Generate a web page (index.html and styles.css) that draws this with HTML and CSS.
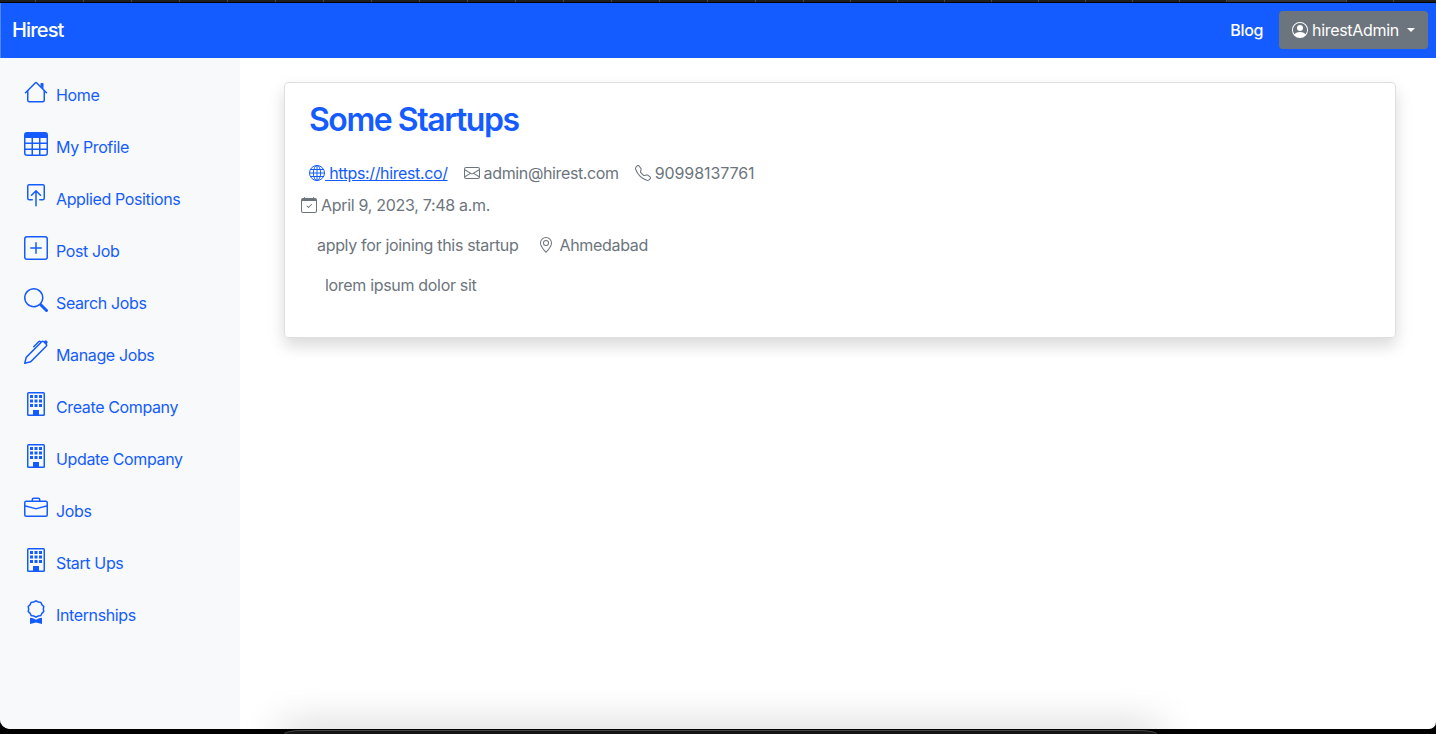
FILE: index.html
```
<!DOCTYPE html>
<html lang="en">
<head>
  <meta charset="UTF-8" />
  <meta name="viewport" content="width=device-width, initial-scale=1" />
  <title>Hirest</title>
  <link rel="stylesheet" href="styles.css">
</head>
<body>

  <!-- Icons -->
  <svg class="sprite" aria-hidden="true">
    <symbol id="house" viewBox="0 0 16 16">
      <path fill-rule="evenodd" d="M2 13.5V7h1v6.5a.5.5 0 0 0 .5.5h9a.5.5 0 0 0 .5-.5V7h1v6.5a1.5 1.5 0 0 1-1.5 1.5h-9A1.5 1.5 0 0 1 2 13.5zm11-11V6l-2-2V2.5a.5.5 0 0 1 .5-.5h1a.5.5 0 0 1 .5.5z"/>
      <path fill-rule="evenodd" d="M7.293 1.5a1 1 0 0 1 1.414 0l6.647 6.646a.5.5 0 0 1-.708.708L8 2.207 1.354 8.854a.5.5 0 1 1-.708-.708L7.293 1.5z"/>
    </symbol>
    <symbol id="table" viewBox="0 0 16 16">
      <path d="M0 2a2 2 0 0 1 2-2h12a2 2 0 0 1 2 2v12a2 2 0 0 1-2 2H2a2 2 0 0 1-2-2V2zm15 2h-4v3h4V4zm0 4h-4v3h4V8zm0 4h-4v3h3a1 1 0 0 0 1-1v-2zm-5 3v-3H6v3h4zm-5 0v-3H1v2a1 1 0 0 0 1 1h3zm-4-4h4V8H1v3zm0-4h4V4H1v3zm5-3v3h4V4H6zm4 4H6v3h4V8z"/>
    </symbol>
    <symbol id="box-arrow" viewBox="0 0 16 16">
      <path d="M3.5 10a.5.5 0 0 1-.5-.5v-8a.5.5 0 0 1 .5-.5h9a.5.5 0 0 1 .5.5v8a.5.5 0 0 1-.5.5h-2a.5.5 0 0 0 0 1h2A1.5 1.5 0 0 0 14 9.5v-8A1.5 1.5 0 0 0 12.5 0h-9A1.5 1.5 0 0 0 2 1.5v8A1.5 1.5 0 0 0 3.5 11h2a.5.5 0 0 0 0-1h-2z"/>
      <path d="M7.646 4.146a.5.5 0 0 1 .708 0l3 3a.5.5 0 0 1-.708.708L8.5 5.707V14.5a.5.5 0 0 1-1 0V5.707L5.354 7.854a.5.5 0 1 1-.708-.708l3-3z"/>
    </symbol>
    <symbol id="plus-square" viewBox="0 0 16 16">
      <path d="M14 1a1 1 0 0 1 1 1v12a1 1 0 0 1-1 1H2a1 1 0 0 1-1-1V2a1 1 0 0 1 1-1h12zM2 0a2 2 0 0 0-2 2v12a2 2 0 0 0 2 2h12a2 2 0 0 0 2-2V2a2 2 0 0 0-2-2H2z"/>
      <path d="M8 4a.5.5 0 0 1 .5.5v3h3a.5.5 0 0 1 0 1h-3v3a.5.5 0 0 1-1 0v-3h-3a.5.5 0 0 1 0-1h3v-3A.5.5 0 0 1 8 4z"/>
    </symbol>
    <symbol id="search" viewBox="0 0 16 16">
      <path d="M11.742 10.344a6.5 6.5 0 1 0-1.397 1.398h-.001c.03.04.062.078.098.115l3.85 3.85a1 1 0 0 0 1.415-1.414l-3.85-3.85a1.007 1.007 0 0 0-.115-.1zM12 6.5a5.5 5.5 0 1 1-11 0 5.5 5.5 0 0 1 11 0z"/>
    </symbol>
    <symbol id="pen" viewBox="0 0 16 16">
      <path d="m13.498.795.149-.149a1.207 1.207 0 1 1 1.707 1.708l-.149.148a1.5 1.5 0 0 1-.059 2.059L4.854 14.854a.5.5 0 0 1-.233.131l-4 1a.5.5 0 0 1-.606-.606l1-4a.5.5 0 0 1 .131-.232l9.642-9.642a.5.5 0 0 0-.642.056L6.854 4.854a.5.5 0 1 1-.708-.708L9.44.854A1.5 1.5 0 0 1 11.5.796a1.5 1.5 0 0 1 1.998-.001zm-.644.766a.5.5 0 0 0-.707 0L1.95 11.756l-.764 3.057 3.057-.764L14.44 3.854a.5.5 0 0 0 0-.708l-1.585-1.585z"/>
    </symbol>
    <symbol id="building" viewBox="0 0 16 16">
      <path fill-rule="evenodd" d="M3 0a1 1 0 0 0-1 1v14a1 1 0 0 0 1 1h10a1 1 0 0 0 1-1V1a1 1 0 0 0-1-1H3zm0 1h10v14h-3v-2.5a.5.5 0 0 0-.5-.5h-3a.5.5 0 0 0-.5.5V15H3V1z"/>
      <path d="M6 12.500a.5.5 0 0 1 .5-.5h3a.5.5 0 0 1 .5.5V16H6z"/>
      <path d="M4 2h2v2H4zM7 2h2v2H7zM10 2h2v2h-2zM4 5h2v2H4zM7 5h2v2H7zM10 5h2v2h-2zM4 8h2v2H4zM7 8h2v2H7zM10 8h2v2h-2z"/>
    </symbol>
    <symbol id="briefcase" viewBox="0 0 16 16">
      <path d="M6.5 1A1.5 1.5 0 0 0 5 2.5V3H1.5A1.5 1.5 0 0 0 0 4.5v8A1.5 1.5 0 0 0 1.5 14h13a1.5 1.5 0 0 0 1.5-1.5v-8A1.5 1.5 0 0 0 14.5 3H11v-.5A1.5 1.5 0 0 0 9.5 1h-3zm0 1h3a.5.5 0 0 1 .5.5V3H6v-.5a.5.5 0 0 1 .5-.5zm1.886 6.914L15 7.151V12.5a.5.5 0 0 1-.5.5h-13a.5.5 0 0 1-.5-.5V7.15l6.614 1.764a1.5 1.5 0 0 0 .772 0zM1.5 4h13a.5.5 0 0 1 .5.5v1.616L8.129 7.948a.5.5 0 0 1-.258 0L1 6.116V4.5a.5.5 0 0 1 .5-.5z"/>
    </symbol>
    <symbol id="award" viewBox="0 0 16 16">
      <path d="M9.669.864 8 0 6.331.864l-1.858.282-.842 1.68-1.337 1.32L2.6 6l-.306 1.854 1.337 1.32.842 1.68 1.858.282L8 12l1.669-.864 1.858-.282.842-1.68 1.337-1.32L13.4 6l.306-1.854-1.337-1.32-.842-1.68L9.669.864zm1.196 1.193.684 1.365 1.086 1.072L12.387 6l.248 1.506-1.086 1.072-.684 1.365-1.51.229L8 10.874l-1.355-.702-1.51-.229-.684-1.365-1.086-1.072L3.614 6l-.25-1.506 1.087-1.072.684-1.365 1.51-.229L8 1.126l1.356.702 1.509.229z"/>
      <path d="M4 11.794V16l4-1 4 1v-4.206l-2.018.306L8 13.126 6.018 12.1 4 11.794z"/>
    </symbol>
    <symbol id="person-circle" viewBox="0 0 16 16">
      <path d="M11 6a3 3 0 1 1-6 0 3 3 0 0 1 6 0z"/>
      <path fill-rule="evenodd" d="M0 8a8 8 0 1 1 16 0A8 8 0 0 1 0 8zm8-7a7 7 0 0 0-5.468 11.37C3.242 11.226 4.805 10 8 10s4.757 1.225 5.468 2.37A7 7 0 0 0 8 1z"/>
    </symbol>
    <symbol id="globe" viewBox="0 0 16 16">
      <g fill="none" stroke="currentColor">
        <circle cx="8" cy="8" r="7.5"/>
        <ellipse cx="8" cy="8" rx="3.6" ry="7.5"/>
        <path d="M8 .5v15M.5 8h15M1.600 4.5h12.8M1.600 11.5h12.8"/>
      </g>
    </symbol>
    <symbol id="envelope" viewBox="0 0 16 16">
      <path d="M0 4a2 2 0 0 1 2-2h12a2 2 0 0 1 2 2v8a2 2 0 0 1-2 2H2a2 2 0 0 1-2-2V4zm2-1a1 1 0 0 0-1 1v.217l7 4.2 7-4.2V4a1 1 0 0 0-1-1H2zm13 2.383-4.708 2.825L15 11.105V5.383zm-.034 6.876-5.64-3.471L8 9.583l-1.326-.795-5.64 3.47A1 1 0 0 0 2 13h12a1 1 0 0 0 .966-.741zM1 11.105l4.708-2.897L1 5.383v5.722z"/>
    </symbol>
    <symbol id="telephone" viewBox="0 0 16 16">
      <path d="M3.654 1.328a.678.678 0 0 0-1.015-.063L1.605 2.3c-.483.484-.661 1.169-.45 1.77a17.568 17.568 0 0 0 4.168 6.608 17.569 17.569 0 0 0 6.608 4.168c.601.211 1.286.033 1.77-.45l1.034-1.034a.678.678 0 0 0-.063-1.015l-2.307-1.794a.678.678 0 0 0-.58-.122l-2.19.547a1.745 1.745 0 0 1-1.657-.459L5.482 8.062a1.745 1.745 0 0 1-.46-1.657l.548-2.19a.678.678 0 0 0-.122-.58L3.654 1.328zM1.884.511a1.745 1.745 0 0 1 2.612.163L6.29 2.98c.329.423.445.974.315 1.494l-.547 2.19a.678.678 0 0 0 .178.643l2.457 2.457a.678.678 0 0 0 .644.178l2.189-.547a1.745 1.745 0 0 1 1.494.315l2.306 1.794c.829.645.905 1.87.163 2.611l-1.034 1.034c-.74.74-1.846 1.065-2.877.702a18.634 18.634 0 0 1-7.01-4.42 18.634 18.634 0 0 1-4.42-7.009c-.362-1.03-.037-2.137.703-2.877L1.885.511z"/>
    </symbol>
    <symbol id="calendar-check" viewBox="0 0 16 16">
      <path d="M10.854 7.146a.5.5 0 0 1 0 .708l-3 3a.5.5 0 0 1-.708 0l-1.5-1.5a.5.5 0 1 1 .708-.708L7.5 9.793l2.646-2.647a.5.5 0 0 1 .708 0z"/>
      <path d="M3.5 0a.5.5 0 0 1 .5.5V1h8V.5a.5.5 0 0 1 1 0V1h1a2 2 0 0 1 2 2v11a2 2 0 0 1-2 2H2a2 2 0 0 1-2-2V3a2 2 0 0 1 2-2h1V.5a.5.5 0 0 1 .5-.5zM1 4v10a1 1 0 0 0 1 1h12a1 1 0 0 0 1-1V4H1z"/>
    </symbol>
    <symbol id="geo-alt" viewBox="0 0 16 16">
      <path d="M12.166 8.94c-.524 1.062-1.234 2.12-1.96 3.07A31.493 31.493 0 0 1 8 14.58a31.481 31.481 0 0 1-2.206-2.57c-.726-.95-1.436-2.008-1.96-3.07C3.304 7.867 3 6.862 3 6a5 5 0 0 1 10 0c0 .862-.305 1.867-.834 2.94zM8 16s6-5.686 6-10A6 6 0 0 0 2 6c0 4.314 6 10 6 10z"/>
      <path d="M8 8a2 2 0 1 1 0-4 2 2 0 0 1 0 4zm0 1a3 3 0 1 0 0-6 3 3 0 0 0 0 6z"/>
    </symbol>
  </svg>

  <div class="tab-strip">
    <i class="tabs-wide"></i>
    <i class="tabs-narrow"></i>
    <i class="tab-active"></i>
    <i class="tabs-last"></i>
  </div>

  <div class="window">
    <nav class="navbar">
      <a class="brand" href="#">Hirest</a>
      <div class="navbar-end">
        <a class="blog" href="#">Blog</a>
        <button class="user-button">
          <svg class="icon"><use href="#person-circle"/></svg>
          <span>hirestAdmin</span>
          <i class="caret"></i>
        </button>
      </div>
    </nav>

    <div class="main">
      <!-- Sidebar -->
      <div class="sidebar">
        <a class="nav-link" href="#"><svg><use href="#house"/></svg><span>Home</span></a>
        <a class="nav-link" href="#"><svg><use href="#table"/></svg><span>My Profile</span></a>
        <a class="nav-link" href="#"><svg><use href="#box-arrow"/></svg><span>Applied Positions</span></a>
        <a class="nav-link" href="#"><svg><use href="#plus-square"/></svg><span>Post Job</span></a>
        <a class="nav-link" href="#"><svg><use href="#search"/></svg><span>Search Jobs</span></a>
        <a class="nav-link" href="#"><svg><use href="#pen"/></svg><span>Manage Jobs</span></a>
        <a class="nav-link" href="#"><svg><use href="#building"/></svg><span>Create Company</span></a>
        <a class="nav-link" href="#"><svg><use href="#building"/></svg><span>Update Company</span></a>
        <a class="nav-link" href="#"><svg><use href="#briefcase"/></svg><span>Jobs</span></a>
        <a class="nav-link" href="#"><svg><use href="#building"/></svg><span>Start Ups</span></a>
        <a class="nav-link" href="#"><svg><use href="#award"/></svg><span>Internships</span></a>
      </div>

      <!-- Startup details -->
      <div class="content">
        <div class="card">
          <h2 class="title">Some Startups</h2>
          <div class="row contact">
            <a class="item website" href="#"><svg class="icon"><use href="#globe"/></svg><span>&nbsp;https://hirest.co/</span></a>
            <span class="item email"><svg class="icon"><use href="#envelope"/></svg><span>admin@hirest.com</span></span>
            <span class="item phone"><svg class="icon"><use href="#telephone"/></svg><span>90998137761</span></span>
          </div>
          <div class="row date">
            <span class="item"><svg class="icon"><use href="#calendar-check"/></svg><span>April 9, 2023, 7:48 a.m.</span></span>
          </div>
          <div class="row about">
            <span class="summary">apply for joining this startup</span>
            <span class="item place"><svg class="icon"><use href="#geo-alt"/></svg><span>Ahmedabad</span></span>
          </div>
          <div class="row description">lorem ipsum dolor sit</div>
        </div>
      </div>
    </div>
  </div>

  <div class="dock"></div>

</body>
</html>
```
FILE: styles.css
```
:root {
  --primary: #145cff;
  --secondary: #6c757d;
  --light: #f8f9fb;
}

* {
  box-sizing: border-box;
}

body {
  margin: 0;
  height: 734px;
  background: #000;
  font-family: Inter, "Liberation Sans", sans-serif;
  font-size: 16px;
  line-height: 24px;
  letter-spacing: -0.37px;
  overflow: hidden;
  position: relative;
}

a {
  color: var(--primary);
  text-decoration: none;
}

svg {
  fill: currentColor;
  flex: none;
}

.sprite {
  display: none;
}

.tab-strip {
  height: 3px;
  display: flex;
  border-bottom: 1px solid #000;
  background: #1e1e1e;
}

.tabs-wide {
  width: 804px;
  background: repeating-linear-gradient(270deg, #494949 0 1px, #1e1e1e 1px 48px);
}

.tabs-narrow {
  width: 422px;
  background: repeating-linear-gradient(90deg, #1e1e1e 0 46px, #494949 46px 47px);
}

.tab-active {
  width: 121px;
  background: #353535;
  border: solid #494949;
  border-width: 0 1px;
}

.tabs-last {
  width: 47px;
  border-right: 1px solid #494949;
}

.window {
  height: 726px;
  display: flex;
  flex-direction: column;
  background: #fff;
  border-radius: 0 0 7px 10px;
  overflow: hidden;
}

.navbar {
  height: 55px;
  flex: none;
  display: flex;
  align-items: center;
  justify-content: space-between;
  padding: 0 8px 1px 11px;
  background: var(--primary);
  border-left: 1px solid #5187ff;
}

.brand {
  color: #fff;
  font-size: 20px;
  font-weight: 500;
  letter-spacing: -0.85px;
}

.navbar-end {
  display: flex;
  align-items: center;
  gap: 16px;
}

.blog {
  color: #fff;
  font-weight: 500;
}

.user-button {
  width: 149px;
  height: 38px;
  padding: 0 13px;
  display: flex;
  align-items: center;
  gap: 4px;
  border: none;
  border-radius: 4px;
  background: var(--secondary);
  color: #fff;
  font: inherit;
  letter-spacing: -0.3px;
}

.icon {
  width: 16px;
  height: 16px;
}

.caret {
  margin-left: auto;
  border-top: 4px solid;
  border-left: 4px solid transparent;
  border-right: 4px solid transparent;
}

.main {
  flex: 1;
  display: flex;
}

.sidebar {
  width: 240px;
  padding: 10px 8px;
  background: var(--light);
}

.nav-link {
  height: 52px;
  padding: 12px 16px 0;
  display: flex;
  gap: 8px;
}

.nav-link svg {
  width: 24px;
  height: 24px;
}

.nav-link span {
  padding-top: 3px;
}

.content {
  flex: 1;
  padding: 24px 40px 0 44px;
}

.card {
  height: 256px;
  padding: 17px 16px 16px;
  border: 1px solid #dfdfdf;
  border-radius: 4px;
  box-shadow: 0 8px 16px rgba(0, 0, 0, 0.15);
  color: var(--secondary);
}

.title {
  margin: 0 0 22px 8px;
  color: var(--primary);
  font-size: 32px;
  font-weight: 600;
  line-height: 39px;
  letter-spacing: -1.45px;
}

.row {
  display: flex;
  align-items: center;
}

.contact {
  padding-left: 8px;
  gap: 16px;
}

.item {
  display: flex;
  align-items: center;
  gap: 4px;
}

.website {
  gap: 0;
}

.website span {
  text-decoration: underline;
}

.phone {
  letter-spacing: -0.1px;
}

.date {
  margin-top: 8px;
  letter-spacing: -0.3px;
}

.about {
  margin-top: 16px;
  padding-left: 16px;
  gap: 20px;
  letter-spacing: -0.32px;
}

.place {
  gap: 5px;
}

.description {
  margin-top: 16px;
  padding-left: 24px;
  letter-spacing: -0.32px;
}

/* top edge of the dock, floating over the window */
.dock {
  position: absolute;
  left: 284px;
  top: 730px;
  width: 873px;
  height: 4px;
  border: 1px solid #444;
  border-bottom: none;
  border-radius: 18px 18px 0 0 / 4px 4px 0 0;
  background: #151515;
  box-shadow: 0 6px 40px 6px rgba(0, 0, 0, 0.3);
}
```
